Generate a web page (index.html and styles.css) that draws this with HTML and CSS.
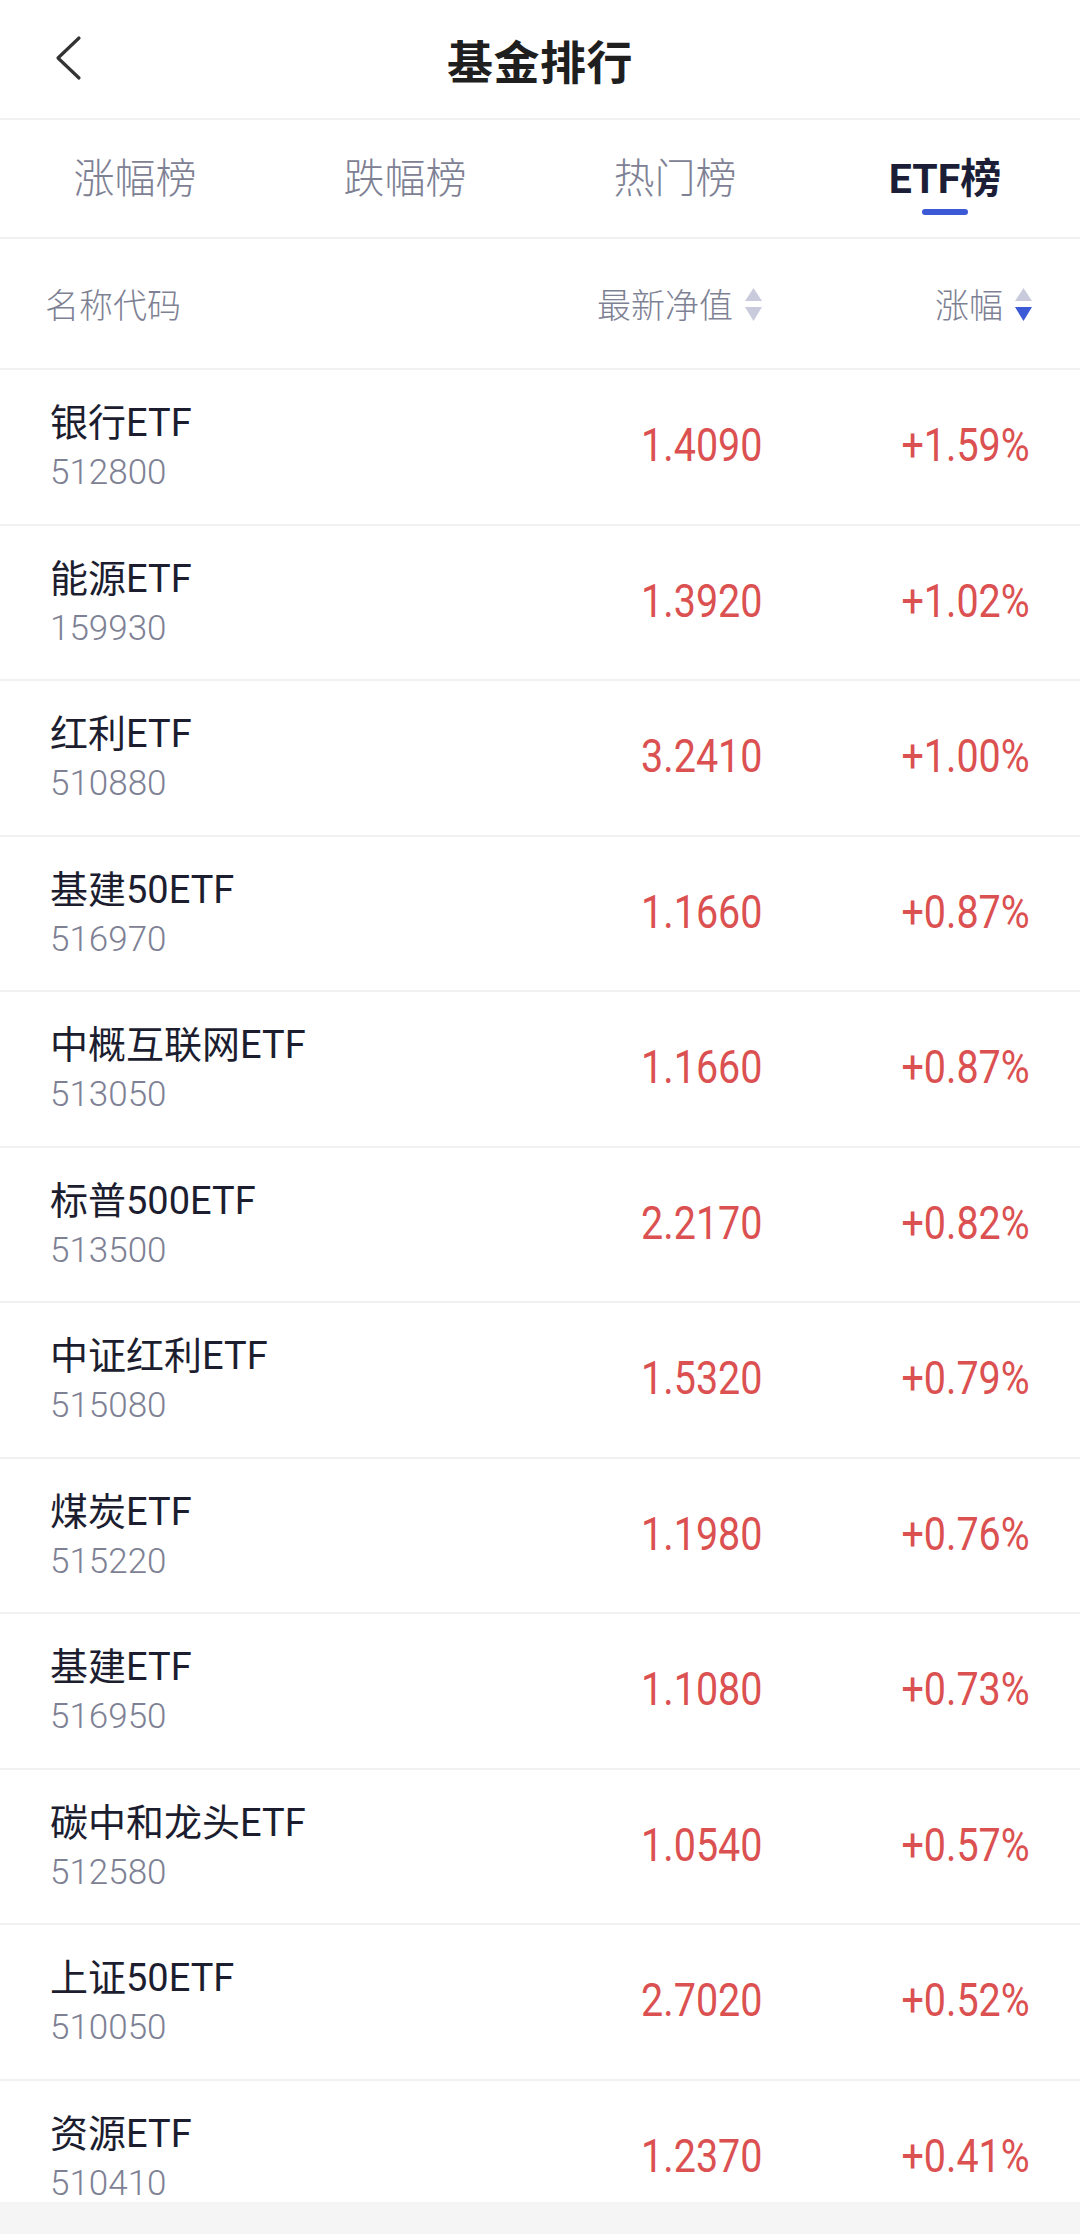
FILE: index.html
```html
<!DOCTYPE html>
<html lang="zh-CN">
  <head>
    <meta charset="UTF-8" />
    <meta name="viewport" content="width=device-width, initial-scale=1.0" />
    <title>基金排行</title>
    <link rel="stylesheet" href="styles.css">
  </head>
  <body>
  <div class="page">
    <header class="topbar">
      <a class="back-btn" href="#">
        <svg width="40" height="48" viewBox="0 0 40 48">
          <polyline points="29,5 8,25 29,45" fill="none" stroke="#333" stroke-width="3.2" stroke-linecap="round" stroke-linejoin="round" />
        </svg>
      </a>
      <h1>基金排行</h1>
    </header>

    <nav class="tabs">
      <div class="tab">涨幅榜</div>
      <div class="tab">跌幅榜</div>
      <div class="tab">热门榜</div>
      <div class="tab active">ETF榜</div>
    </nav>

    <div class="list-head">
      <div class="col-name">名称代码</div>
      <div class="col-sort">最新净值
        <svg class="sort-icon" width="17" height="34" viewBox="0 0 17 34">
          <polygon points="8.5,0 17,13 0,13" fill="#c9cbdd" />
          <polygon points="0,19 17,19 8.5,33" fill="#c9cbdd" />
        </svg>
      </div>
      <div class="col-sort">涨幅
        <svg class="sort-icon" width="17" height="34" viewBox="0 0 17 34">
          <polygon points="8.5,0 17,13 0,13" fill="#c9cbdd" />
          <polygon points="0,19 17,19 8.5,33" fill="#3d5ad6" />
        </svg>
      </div>
    </div>

    <div class="fund-list">
      <div class="fund-row">
        <div class="fund-info"><div class="fund-name">银行ETF</div><div class="fund-code">512800</div></div>
        <div class="fund-num"><span>1.4090</span></div>
        <div class="fund-num"><span>+1.59%</span></div>
      </div>
      <div class="fund-row">
        <div class="fund-info"><div class="fund-name">能源ETF</div><div class="fund-code">159930</div></div>
        <div class="fund-num"><span>1.3920</span></div>
        <div class="fund-num"><span>+1.02%</span></div>
      </div>
      <div class="fund-row">
        <div class="fund-info"><div class="fund-name">红利ETF</div><div class="fund-code">510880</div></div>
        <div class="fund-num"><span>3.2410</span></div>
        <div class="fund-num"><span>+1.00%</span></div>
      </div>
      <div class="fund-row">
        <div class="fund-info"><div class="fund-name">基建50ETF</div><div class="fund-code">516970</div></div>
        <div class="fund-num"><span>1.1660</span></div>
        <div class="fund-num"><span>+0.87%</span></div>
      </div>
      <div class="fund-row">
        <div class="fund-info"><div class="fund-name">中概互联网ETF</div><div class="fund-code">513050</div></div>
        <div class="fund-num"><span>1.1660</span></div>
        <div class="fund-num"><span>+0.87%</span></div>
      </div>
      <div class="fund-row">
        <div class="fund-info"><div class="fund-name">标普500ETF</div><div class="fund-code">513500</div></div>
        <div class="fund-num"><span>2.2170</span></div>
        <div class="fund-num"><span>+0.82%</span></div>
      </div>
      <div class="fund-row">
        <div class="fund-info"><div class="fund-name">中证红利ETF</div><div class="fund-code">515080</div></div>
        <div class="fund-num"><span>1.5320</span></div>
        <div class="fund-num"><span>+0.79%</span></div>
      </div>
      <div class="fund-row">
        <div class="fund-info"><div class="fund-name">煤炭ETF</div><div class="fund-code">515220</div></div>
        <div class="fund-num"><span>1.1980</span></div>
        <div class="fund-num"><span>+0.76%</span></div>
      </div>
      <div class="fund-row">
        <div class="fund-info"><div class="fund-name">基建ETF</div><div class="fund-code">516950</div></div>
        <div class="fund-num"><span>1.1080</span></div>
        <div class="fund-num"><span>+0.73%</span></div>
      </div>
      <div class="fund-row">
        <div class="fund-info"><div class="fund-name">碳中和龙头ETF</div><div class="fund-code">512580</div></div>
        <div class="fund-num"><span>1.0540</span></div>
        <div class="fund-num"><span>+0.57%</span></div>
      </div>
      <div class="fund-row">
        <div class="fund-info"><div class="fund-name">上证50ETF</div><div class="fund-code">510050</div></div>
        <div class="fund-num"><span>2.7020</span></div>
        <div class="fund-num"><span>+0.52%</span></div>
      </div>
      <div class="fund-row">
        <div class="fund-info"><div class="fund-name">资源ETF</div><div class="fund-code">510410</div></div>
        <div class="fund-num"><span>1.2370</span></div>
        <div class="fund-num"><span>+0.41%</span></div>
      </div>
    </div>

    <div class="bottom-bar"></div>
  </div>
  </body>
</html>
```

FILE: styles.css
```css
* {
  margin: 0;
  padding: 0;
  box-sizing: border-box;
  font-family: Roboto, "Noto Sans CJK SC", sans-serif;
}

body {
  background-color: #fff;
}

.page {
  height: 2234px;
  display: flex;
  flex-direction: column;
  overflow: hidden;
}

/* top bar */
.topbar {
  height: 120px;
  flex-shrink: 0;
  display: flex;
  align-items: center;
  justify-content: center;
  position: relative;
  border-bottom: 2px solid #f1f1f3;
}

.back-btn {
  position: absolute;
  left: 50px;
  top: 33px;
  display: block;
}

.topbar h1 {
  font-size: 46px;
  font-weight: 700;
  color: #1f1f1f;
  letter-spacing: 0.5px;
}

/* tabs */
.tabs {
  height: 119px;
  flex-shrink: 0;
  display: grid;
  grid-template-columns: repeat(4, 1fr);
  border-bottom: 2px solid #f1f1f3;
}

.tab {
  display: flex;
  align-items: center;
  justify-content: center;
  padding-bottom: 8px;
  font-size: 41px;
  font-weight: 300;
  color: #7e8194;
  position: relative;
}

.tab.active {
  color: #1b1e36;
  font-weight: 700;
}

.tab.active::after {
  content: "";
  position: absolute;
  left: 50%;
  top: 89px;
  width: 46px;
  height: 6px;
  margin-left: -23px;
  border-radius: 3px;
  background: #3d5ad6;
}

/* list header */
.list-head {
  height: 131px;
  flex-shrink: 0;
  display: grid;
  grid-template-columns: 1fr 300px 270px;
  align-items: center;
  padding: 0 48px 0 45px;
  border-bottom: 2px solid #f1f1f3;
  font-size: 34px;
  font-weight: 300;
  color: #7e8194;
}

.col-sort {
  display: flex;
  align-items: center;
  justify-content: flex-end;
  gap: 12px;
}

.sort-icon {
  margin-top: 2px;
}

/* fund rows */
.fund-list {
  flex: 1;
  overflow: hidden;
}

.fund-row {
  height: 155.5px;
  display: grid;
  grid-template-columns: 1fr 300px 268px;
  align-items: center;
  padding: 0 50px;
  border-bottom: 2px solid #f1f1f3;
}

.fund-info {
  align-self: start;
  padding-top: 30px;
}

.fund-name {
  font-size: 38px;
  line-height: 46px;
  color: #1c1e30;
}

.fund-code {
  margin-top: 10px;
  font-size: 35px;
  font-weight: 300;
  line-height: 34px;
  color: #7e8194;
}

.fund-num {
  text-align: right;
  font-size: 47px;
  color: #db5050;
  padding-bottom: 4px;
}

.fund-num span {
  display: inline-block;
  transform: scaleX(0.84);
  transform-origin: right center;
}

.bottom-bar {
  height: 32px;
  flex-shrink: 0;
  background: #f5f5f5;
}
```
